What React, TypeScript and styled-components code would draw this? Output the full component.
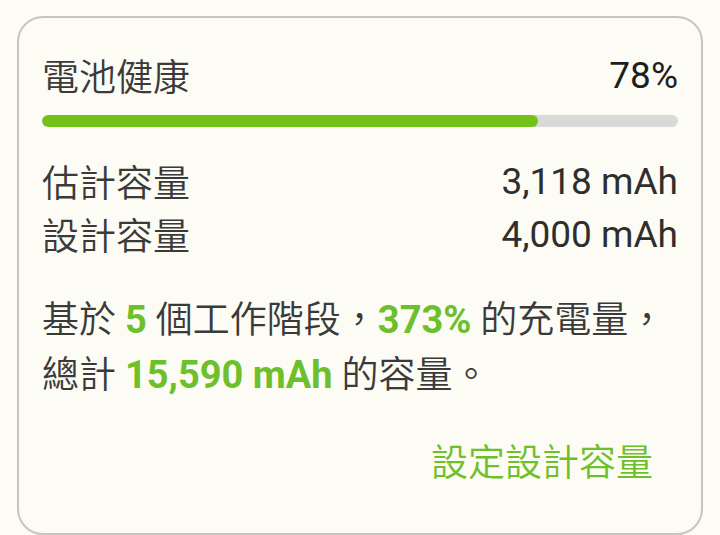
import React from "react";
import styled, { createGlobalStyle } from "styled-components";

const GlobalStyle = createGlobalStyle`
  html, body {
    margin: 0;
    padding: 0;
    background: #fcfcf4;
  }
  body {
    font-family: Roboto, "Noto Sans CJK TC", sans-serif;
    -webkit-font-smoothing: antialiased;
  }
`;

const health = 78;

export default function App(): React.JSX.Element {
  return (
    <>
      <GlobalStyle />
      <StyledPage>
        <StyledCard>
          <StyledHeader>
            <StyledLabel>電池健康</StyledLabel>
            <StyledValue $dark>{health}%</StyledValue>
          </StyledHeader>
          <StyledTrack>
            <StyledFill style={{ width: `${health}%` }} />
          </StyledTrack>
          <StyledRows>
            <StyledRow>
              <StyledLabel>估計容量</StyledLabel>
              <StyledValue>3,118 mAh</StyledValue>
            </StyledRow>
            <StyledRow>
              <StyledLabel>設計容量</StyledLabel>
              <StyledValue>4,000 mAh</StyledValue>
            </StyledRow>
          </StyledRows>
          <StyledSummary>
            基於 <StyledStrong>5</StyledStrong> 個工作階段，
            <StyledStrong>373%</StyledStrong> 的充電量，
            <br />
            總計 <StyledStrong>15,590 mAh</StyledStrong> 的容量。
          </StyledSummary>
          <StyledActions>
            <StyledButton>設定設計容量</StyledButton>
          </StyledActions>
        </StyledCard>
      </StyledPage>
    </>
  );
}

const StyledPage = styled.div`
  width: 720px;
  height: 535px;
  padding: 16px 17px 0 17px;
  box-sizing: border-box;
  overflow: hidden;
`;

const StyledCard = styled.div`
  width: 686px;
  height: 519px;
  box-sizing: border-box;
  border: 2px solid #c6c6be;
  border-radius: 26px;
  background: #fcfcf4;
  padding: 35px 23px 0 23px;
  display: flex;
  flex-direction: column;
`;

const StyledHeader = styled.div`
  display: flex;
  justify-content: space-between;
  align-items: center;
  height: 44px;
`;

const StyledLabel = styled.span`
  font-family: "Noto Sans CJK TC", sans-serif;
  font-size: 37px;
  font-weight: 350;
  color: #3a3a3a;
  line-height: 1;
`;

const StyledValue = styled.span<{ $dark?: boolean }>`
  font-family: Roboto, sans-serif;
  font-size: 37px;
  color: ${({ $dark }) => ($dark ? "#1e1e1e" : "#2e2e2e")};
  line-height: 1;
`;

const StyledTrack = styled.div`
  margin-top: 18px;
  height: 12px;
  border-radius: 6px;
  background: #d9d9d7;
  overflow: hidden;
`;

const StyledFill = styled.div`
  height: 100%;
  border-radius: 6px;
  background: #72c218;
`;

const StyledRows = styled.div`
  margin-top: 32px;
  display: flex;
  flex-direction: column;
  gap: 9px;
`;

const StyledRow = styled.div`
  display: flex;
  justify-content: space-between;
  align-items: center;
  height: 44px;
`;

const StyledSummary = styled.p`
  margin: 37px 0 0 0;
  font-family: Roboto, "Noto Sans CJK TC", sans-serif;
  font-size: 37px;
  font-weight: 350;
  line-height: 54px;
  color: #3a3a3a;
  white-space: nowrap;
`;

const StyledStrong = styled.b`
  font-weight: 700;
  font-size: 38px;
  color: #6ebf2c;
`;

const StyledActions = styled.div`
  margin-top: 39px;
  display: flex;
  justify-content: flex-end;
  padding-right: 25px;
`;

const StyledButton = styled.button`
  border: none;
  background: none;
  padding: 0;
  font-family: "Noto Sans CJK TC", sans-serif;
  font-size: 37px;
  font-weight: 350;
  line-height: 1;
  color: #6ebf2c;
  cursor: pointer;
`;
